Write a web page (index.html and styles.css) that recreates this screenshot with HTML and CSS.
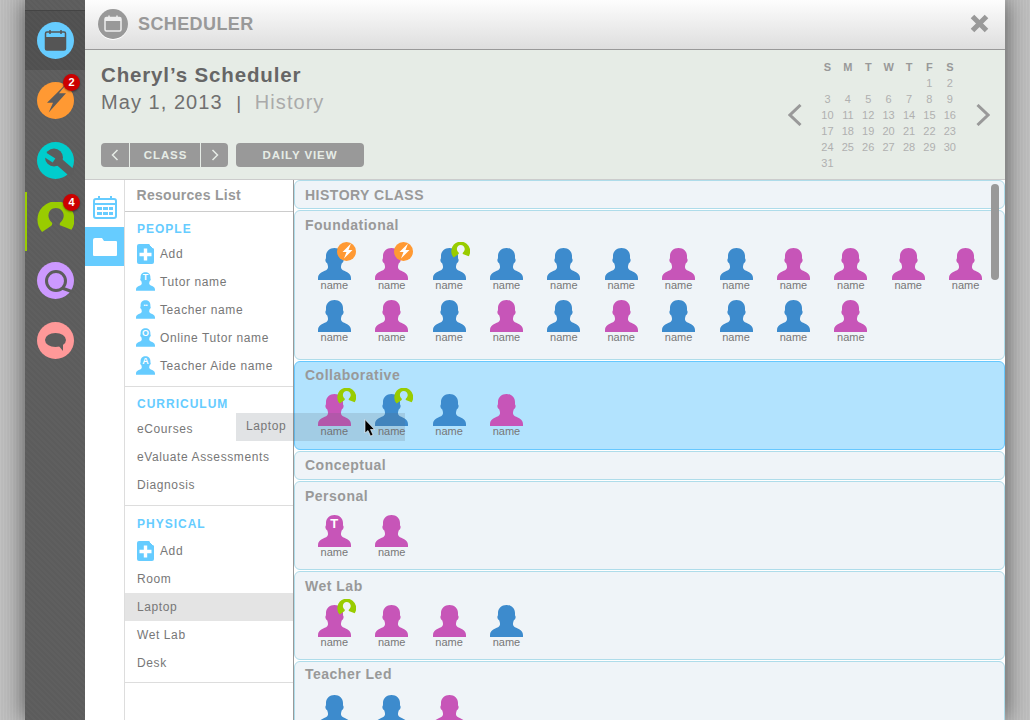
FILE: index.html
```html
<!DOCTYPE html>
<html lang="en">
<head>
    <meta charset="UTF-8">
    <title>Scheduler</title>
    <link rel="stylesheet" href="styles.css">
</head>
<body>
    <svg class="sprites" width="0" height="0">
        <symbol id="person" viewBox="0 0 33 32">
            <path d="M16.5 0C21.5 0 25 3.5 25 8C25 10 25 11 25.6 11.5C25.8 13 25 14.5 23.7 15.5C22.8 18.5 22.5 20 24 21.5C26 23.5 33 24 33 30L33 32L0 32L0 30C0 24 7 23.5 9 21.5C10.5 20 10.2 18.5 9.3 15.5C8 14.5 7.2 13 7.4 11.5C8 11 8 10 8 8C8 3.5 11.5 0 16.5 0Z"/>
        </symbol>
        <symbol id="ring" viewBox="0 0 19 19">
            <path d="M2.6 15.4A9.5 9.5 0 1 1 17.7 14.3L11.8 12C11.6 11.5 11.6 11 12 10.5C13.2 9.5 13.8 8.2 13.7 6.8C13.5 4.5 11.8 3.1 9.7 3.1C7.6 3.1 6 4.5 5.9 6.8C5.8 8.2 6.4 9.5 7.6 10.5C8 11 7.9 11.8 7 12.4Z"/>
        </symbol>
        <symbol id="bolt" viewBox="0 0 19 19">
            <circle cx="9.5" cy="9.5" r="9.5" fill="#ff9933"/>
            <path d="M14 1.5L5.5 10L9.5 10L7 16.5L15.5 8L11.5 8Z" fill="#fff"/>
        </symbol>
        <symbol id="add" viewBox="0 0 17 20">
            <path d="M2 0L12 0L17 5L17 18Q17 20 15 20L2 20Q0 20 0 18L0 2Q0 0 2 0Z" fill="#66ccff"/>
            <path d="M13 1L16 4" stroke="#fff"/>
            <path d="M6.8 4.5H10.2V8.8H14.5V12.2H10.2V16.5H6.8V12.2H2.5V8.8H6.8Z" fill="#fff"/>
        </symbol>
    </svg>

    <div class="app">
        <nav class="rail">
            <div class="rail-item active">
                <svg class="rail-icon" viewBox="0 0 37 37">
                    <circle cx="18.5" cy="18.5" r="18.5" fill="#66ccff"/>
                    <rect x="8.5" y="10" width="20" height="18" rx="1.5" fill="none" stroke="#555" stroke-width="1.5"/>
                    <rect x="8.5" y="15" width="20" height="13" fill="#555"/>
                    <path d="M13 8V12M24 8V12" stroke="#555" stroke-width="1.5"/>
                </svg>
            </div>
            <div class="rail-item">
                <svg class="rail-icon" viewBox="0 0 37 37">
                    <circle cx="18.5" cy="18.5" r="18.5" fill="#ff9933"/>
                    <path d="M31 0L10 20.7L16 20.7L11.7 30.5L29 11.3L22 11.3Z" fill="#5c5c5c"/>
                </svg>
                <span class="rail-badge">2</span>
            </div>
            <div class="rail-item">
                <svg class="rail-icon" viewBox="0 0 37 37">
                    <circle cx="18.5" cy="18.5" r="18.5" fill="#00cccc"/>
                    <circle cx="17" cy="15.5" r="9" fill="#5c5c5c"/>
                    <path d="M20 18L36 32" stroke="#5c5c5c" stroke-width="8"/>
                    <path d="M6 11.5L17 18.5" stroke="#00cccc" stroke-width="5"/>
                </svg>
            </div>
            <div class="rail-item user">
                <svg class="rail-icon ring-green" viewBox="0 0 19 19"><use href="#ring"/></svg>
                <span class="rail-badge">4</span>
            </div>
            <div class="rail-item">
                <svg class="rail-icon" viewBox="0 0 37 37">
                    <circle cx="18.5" cy="18.5" r="18.5" fill="#cc99ff"/>
                    <circle cx="19" cy="19" r="9.5" fill="none" stroke="#5c5c5c" stroke-width="3"/>
                    <path d="M25 26L36 30" stroke="#5c5c5c" stroke-width="3"/>
                </svg>
            </div>
            <div class="rail-item">
                <svg class="rail-icon" viewBox="0 0 37 37">
                    <circle cx="18.5" cy="18.5" r="18.5" fill="#ff9999"/>
                    <ellipse cx="18.5" cy="18" rx="10.5" ry="7" fill="#5c5c5c"/>
                    <path d="M21 23L26 29L26 22Z" fill="#5c5c5c"/>
                </svg>
            </div>
        </nav>

        <main class="window">
            <header class="titlebar">
                <span class="title-icon">
                    <svg viewBox="0 0 30 30" width="30" height="30">
                        <rect x="7" y="8.5" width="16" height="13.5" rx="1.5" fill="none" stroke="#eee" stroke-width="1.5"/>
                        <rect x="7" y="9" width="16" height="3" fill="#eee"/>
                        <path d="M11 6.5V9.5M19 6.5V9.5" stroke="#eee" stroke-width="1.5"/>
                    </svg>
                </span>
                <h1>SCHEDULER</h1>
                <svg class="close" viewBox="0 0 19 19"><path d="M2.5 2.5L16.5 16.5M16.5 2.5L2.5 16.5" stroke="#999" stroke-width="5"/></svg>
            </header>

            <section class="subheader">
                <div class="sub-left">
                    <h2>Cheryl’s Scheduler</h2>
                    <div class="sub-date">May 1, 2013 <span class="sep">|</span> <span class="sub-class">History</span></div>
                    <div class="toolbar">
                        <div class="segmented">
                            <button class="btn btn-arrow"><svg viewBox="0 0 8 12" width="8" height="12"><path d="M6.5 1L1.5 6L6.5 11" fill="none" stroke="#e6ece6" stroke-width="1.5"/></svg></button>
                            <button class="btn btn-class">CLASS</button>
                            <button class="btn btn-arrow"><svg viewBox="0 0 8 12" width="8" height="12"><path d="M1.5 1L6.5 6L1.5 11" fill="none" stroke="#e6ece6" stroke-width="1.5"/></svg></button>
                        </div>
                        <button class="btn btn-view">DAILY VIEW</button>
                    </div>
                </div>
                <div class="calendar">
                    <svg class="cal-arrow" viewBox="0 0 14 22" width="14" height="22"><path d="M12.5 1L2 11L12.5 21" fill="none" stroke="#999" stroke-width="3"/></svg>
                    <div class="cal-grid">
                        <b>S</b><b>M</b><b>T</b><b>W</b><b>T</b><b>F</b><b>S</b>
                        <span></span><span></span><span></span><span></span><span></span><span>1</span><span>2</span>
                        <span>3</span><span>4</span><span>5</span><span>6</span><span>7</span><span>8</span><span>9</span>
                        <span>10</span><span>11</span><span>12</span><span>13</span><span>14</span><span>15</span><span>16</span>
                        <span>17</span><span>18</span><span>19</span><span>20</span><span>21</span><span>22</span><span>23</span>
                        <span>24</span><span>25</span><span>26</span><span>27</span><span>28</span><span>29</span><span>30</span>
                        <span>31</span>
                    </div>
                    <svg class="cal-arrow" viewBox="0 0 14 22" width="14" height="22"><path d="M1.5 1L12 11L1.5 21" fill="none" stroke="#999" stroke-width="3"/></svg>
                </div>
            </section>

            <section class="body-row">
                <div class="tabs">
                    <div class="tab">
                        <svg viewBox="0 0 24 23" width="24" height="23">
                            <rect x="1" y="3" width="22" height="19" rx="2" fill="none" stroke="#66ccff" stroke-width="2"/>
                            <path d="M1 8H23" stroke="#66ccff" stroke-width="2"/>
                            <path d="M4 11H9V14H4ZM10 11H15V14H10ZM16 11H20V14H16ZM4 16H9V19H4ZM10 16H15V19H10ZM16 16H20V19H16Z" fill="#66ccff"/>
                            <path d="M6 0V4M18 0V4" stroke="#66ccff" stroke-width="2"/>
                        </svg>
                    </div>
                    <div class="tab selected">
                        <svg viewBox="0 0 24 18" width="24" height="18"><path d="M0 2Q0 0 2 0H9L11 3H23Q24 3 24 4V17Q24 18 23 18H1Q0 18 0 17Z" fill="#fff"/></svg>
                    </div>
                </div>

                <aside class="resources">
                    <h3 class="resources-head">Resources List</h3>
                    <div class="res-section">
                        <h4>PEOPLE</h4>
                        <div class="res-row"><svg class="add-icon"><use href="#add"/></svg>Add</div>
                        <div class="res-row"><span class="mini"><svg><use href="#person"/></svg><i>T</i></span>Tutor name</div>
                        <div class="res-row"><span class="mini"><svg><use href="#person"/></svg><i class="eyes">••</i></span>Teacher name</div>
                        <div class="res-row"><span class="mini"><svg><use href="#person"/></svg><i>O</i></span>Online Tutor name</div>
                        <div class="res-row"><span class="mini"><svg><use href="#person"/></svg><i>A</i></span>Teacher Aide name</div>
                    </div>
                    <div class="res-section">
                        <h4>CURRICULUM</h4>
                        <div class="res-row">eCourses</div>
                        <div class="res-row">eValuate Assessments</div>
                        <div class="res-row">Diagnosis</div>
                    </div>
                    <div class="res-section physical">
                        <h4>PHYSICAL</h4>
                        <div class="res-row"><svg class="add-icon"><use href="#add"/></svg>Add</div>
                        <div class="res-row">Room</div>
                        <div class="res-row current">Laptop</div>
                        <div class="res-row">Wet Lab</div>
                        <div class="res-row">Desk</div>
                    </div>
                </aside>

                <div class="groups">
                    <div class="group slim"><h3>HISTORY CLASS</h3></div>

                    <div class="group foundational">
                        <h3>Foundational</h3>
                        <div class="people">
                            <div class="person blue"><svg><use href="#person"/></svg><svg class="badge"><use href="#bolt"/></svg><span>name</span></div>
                            <div class="person pink"><svg><use href="#person"/></svg><svg class="badge"><use href="#bolt"/></svg><span>name</span></div>
                            <div class="person blue"><svg><use href="#person"/></svg><svg class="badge ring-green"><use href="#ring"/></svg><span>name</span></div>
                            <div class="person blue"><svg><use href="#person"/></svg><span>name</span></div>
                            <div class="person blue"><svg><use href="#person"/></svg><span>name</span></div>
                            <div class="person blue"><svg><use href="#person"/></svg><span>name</span></div>
                            <div class="person pink"><svg><use href="#person"/></svg><span>name</span></div>
                            <div class="person blue"><svg><use href="#person"/></svg><span>name</span></div>
                            <div class="person pink"><svg><use href="#person"/></svg><span>name</span></div>
                            <div class="person pink"><svg><use href="#person"/></svg><span>name</span></div>
                            <div class="person pink"><svg><use href="#person"/></svg><span>name</span></div>
                            <div class="person pink"><svg><use href="#person"/></svg><span>name</span></div>
                            <div class="person blue"><svg><use href="#person"/></svg><span>name</span></div>
                            <div class="person pink"><svg><use href="#person"/></svg><span>name</span></div>
                            <div class="person blue"><svg><use href="#person"/></svg><span>name</span></div>
                            <div class="person pink"><svg><use href="#person"/></svg><span>name</span></div>
                            <div class="person blue"><svg><use href="#person"/></svg><span>name</span></div>
                            <div class="person pink"><svg><use href="#person"/></svg><span>name</span></div>
                            <div class="person blue"><svg><use href="#person"/></svg><span>name</span></div>
                            <div class="person blue"><svg><use href="#person"/></svg><span>name</span></div>
                            <div class="person blue"><svg><use href="#person"/></svg><span>name</span></div>
                            <div class="person pink"><svg><use href="#person"/></svg><span>name</span></div>
                        </div>
                    </div>

                    <div class="group hover">
                        <h3>Collaborative</h3>
                        <div class="people">
                            <div class="person pink"><svg><use href="#person"/></svg><svg class="badge ring-green"><use href="#ring"/></svg><span>name</span></div>
                            <div class="person blue"><svg><use href="#person"/></svg><svg class="badge ring-green"><use href="#ring"/></svg><span>name</span></div>
                            <div class="person blue"><svg><use href="#person"/></svg><span>name</span></div>
                            <div class="person pink"><svg><use href="#person"/></svg><span>name</span></div>
                        </div>
                    </div>

                    <div class="group slim conceptual"><h3>Conceptual</h3></div>

                    <div class="group">
                        <h3>Personal</h3>
                        <div class="people">
                            <div class="person pink"><svg><use href="#person"/></svg><i class="letter">T</i><span>name</span></div>
                            <div class="person pink"><svg><use href="#person"/></svg><span>name</span></div>
                        </div>
                    </div>

                    <div class="group">
                        <h3>Wet Lab</h3>
                        <div class="people">
                            <div class="person pink"><svg><use href="#person"/></svg><svg class="badge ring-green"><use href="#ring"/></svg><span>name</span></div>
                            <div class="person pink"><svg><use href="#person"/></svg><span>name</span></div>
                            <div class="person pink"><svg><use href="#person"/></svg><span>name</span></div>
                            <div class="person blue"><svg><use href="#person"/></svg><span>name</span></div>
                        </div>
                    </div>

                    <div class="group teacher">
                        <h3>Teacher Led</h3>
                        <div class="people">
                            <div class="person blue"><svg><use href="#person"/></svg></div>
                            <div class="person blue"><svg><use href="#person"/></svg></div>
                            <div class="person pink"><svg><use href="#person"/></svg></div>
                        </div>
                    </div>

                    <div class="scrollbar"></div>
                </div>
            </section>

            <div class="drag-ghost">Laptop</div>
            <svg class="cursor" viewBox="0 0 12 18" width="12" height="18"><path d="M1 0.5L1 14L4 11.5L6.5 17L9 16L6.5 10.5L10.5 10.5Z" fill="#000" stroke="#fff" stroke-width="0.6"/></svg>
        </main>
    </div>
</body>
</html>
```

FILE: styles.css
```css
* {
    box-sizing: border-box;
}
html, body {
    margin: 0;
    height: 720px;
    overflow: hidden;
}
body {
    font-family: "Liberation Sans", Arial, sans-serif;
    background: repeating-linear-gradient(90deg, #c2c2c2 0 1px, #bdbdbd 1px 3px);
}
h1, h2, h3, h4 {
    margin: 0;
}
.sprites {
    position: absolute;
}
.app {
    display: flex;
    width: 980px;
    height: 720px;
    margin-left: 25px;
    box-shadow: 0 0 22px rgba(0, 0, 0, 0.6);
}

/* left rail */
.rail {
    width: 60px;
    padding-top: 10px;
    flex-shrink: 0;
    background: repeating-linear-gradient(45deg, #5c5c5c 0 2px, #5f5f5f 2px 4px);
}
.rail-item {
    position: relative;
    display: flex;
    align-items: center;
    justify-content: center;
    height: 60px;
}
.rail-item.active {
    background: repeating-linear-gradient(45deg, #505050 0 2px, #535353 2px 4px);
    border-top: 1px solid #444;
}
.rail-item.user::before {
    content: "";
    position: absolute;
    left: 0;
    top: 2px;
    width: 2px;
    height: 59px;
    background: #99cc00;
}
.rail-icon {
    width: 37px;
    height: 37px;
    display: block;
}
.ring-green {
    fill: #99cc00;
}
.rail-badge {
    position: absolute;
    left: 38px;
    top: 4px;
    width: 17px;
    height: 17px;
    border-radius: 50%;
    background: #cc0000;
    color: #fff;
    font-size: 11px;
    font-weight: bold;
    line-height: 17px;
    text-align: center;
    box-shadow: 0 1px 2px rgba(0, 0, 0, 0.4);
}

/* window */
.window {
    position: relative;
    flex: 1;
    display: flex;
    flex-direction: column;
    min-width: 0;
    background: #fff;
}
.titlebar {
    display: flex;
    align-items: center;
    height: 50px;
    flex-shrink: 0;
    padding: 0 16px 1px 13px;
    background: linear-gradient(#fdfdfd, #dedede);
    border-bottom: 1px solid #999;
}
.title-icon {
    width: 30px;
    height: 30px;
    border-radius: 50%;
    background: #999;
    box-shadow: 0 1px 0 #fff;
}
.titlebar h1 {
    margin-left: 10px;
    font-size: 18px;
    letter-spacing: 0.4px;
    color: #999;
}
.close {
    width: 19px;
    height: 19px;
    margin: 0 0 1px auto;
}

.subheader {
    display: flex;
    justify-content: space-between;
    height: 130px;
    flex-shrink: 0;
    background: #e6ece6;
    border-bottom: 1px solid #ccc;
}
.sub-left {
    display: flex;
    flex-direction: column;
    padding: 13px 0 12px 16px;
}
.sub-left h2 {
    font-size: 20.5px;
    line-height: 24px;
    letter-spacing: 0.85px;
    color: #666;
}
.sub-date {
    margin-top: 3px;
    font-size: 20px;
    line-height: 24px;
    letter-spacing: 1.05px;
    color: #707070;
}
.sep {
    margin: 0 6px 0 7px;
    font-size: 19px;
}
.sub-class {
    color: #aaa;
}
.toolbar {
    display: flex;
    gap: 8px;
    margin-top: auto;
}
.segmented {
    display: flex;
    gap: 1px;
}
.btn {
    display: flex;
    align-items: center;
    justify-content: center;
    height: 24px;
    padding: 0;
    border: none;
    background: #999;
    color: #e6ece6;
    font-family: inherit;
    font-size: 11.5px;
    font-weight: bold;
    letter-spacing: 0.9px;
}
.btn-arrow {
    width: 28px;
}
.btn-arrow:first-child {
    border-radius: 4px 0 0 4px;
}
.btn-arrow:last-child {
    width: 27px;
    border-radius: 0 4px 4px 0;
}
.btn-class {
    width: 70px;
    padding-left: 1px;
}
.btn-view {
    width: 128px;
    border-radius: 4px;
}
.calendar {
    display: flex;
    align-items: center;
    padding: 9px 15px 0 0;
}
.cal-arrow {
    margin-top: -9px;
}
.cal-grid {
    display: grid;
    grid-template-columns: repeat(7, 20.4px);
    grid-auto-rows: 16px;
    margin: 0 16px 0 15px;
    align-self: flex-start;
    font-size: 11px;
    line-height: 16px;
    text-align: center;
    color: #b0b0b0;
}
.cal-grid b {
    color: #999;
}

/* lower part */
.body-row {
    display: flex;
    flex: 1;
    min-height: 0;
}
.tabs {
    width: 40px;
    flex-shrink: 0;
    border-right: 1px solid #ddd;
}
.tab {
    display: flex;
    align-items: center;
    justify-content: center;
    height: 47px;
    padding-top: 8px;
}
.tab.selected {
    height: 39px;
    padding-top: 0;
    background: #66ccff;
}
.resources {
    width: 169px;
    flex-shrink: 0;
    border-right: 1px solid #999;
}
.resources-head {
    height: 32px;
    padding: 7px 0 0 11.5px;
    font-size: 14px;
    line-height: 16px;
    letter-spacing: 0.3px;
    color: #999;
    border-bottom: 1px solid #ccc;
}
.res-section {
    padding: 10px 0 6px;
    border-bottom: 1px solid #ddd;
}
.res-section h4 {
    margin-bottom: 4px;
    padding-left: 12px;
    font-size: 12px;
    line-height: 14px;
    letter-spacing: 1px;
    color: #66ccff;
}
.res-section.physical {
    padding: 11px 0 5px;
}
.res-section.physical h4 {
    margin-bottom: 6px;
}
.res-row {
    display: flex;
    align-items: center;
    height: 28px;
    padding-left: 12px;
    font-size: 12px;
    letter-spacing: 0.6px;
    color: #777;
}
.res-row.current {
    background: #e4e4e4;
}
.add-icon {
    width: 17px;
    height: 20px;
    margin-right: 6px;
}
.mini {
    position: relative;
    width: 19px;
    height: 19px;
    margin: -2px 5px 0 -1px;
    fill: #66ccff;
}
.mini svg {
    width: 19px;
    height: 19px;
    display: block;
}
.mini i {
    position: absolute;
    left: 0;
    top: 1px;
    width: 19px;
    font-size: 9px;
    font-style: normal;
    font-weight: bold;
    line-height: 9px;
    letter-spacing: 0;
    text-align: center;
    color: #fff;
}
.mini i.eyes {
    font-size: 6px;
}

.groups {
    position: relative;
    flex: 1;
    display: flex;
    flex-direction: column;
    gap: 1px;
    min-width: 0;
    overflow: hidden;
    background: #fff;
}
.group {
    height: 89px;
    flex-shrink: 0;
    padding: 6px 0 0 10px;
    background: #eff4f8;
    border: 1px solid #aedcea;
    border-radius: 6px;
}
.group h3 {
    font-size: 14px;
    line-height: 16px;
    letter-spacing: 0.5px;
    color: #999;
}
.group.slim {
    height: 29px;
}
.group.conceptual {
    padding-top: 5px;
}
.group.foundational {
    height: 150px;
}
.group.foundational .people {
    margin-top: 15px;
}
.group.hover {
    padding-top: 5px;
    background: #b2e3fe;
    border-color: #66c8ff;
}
.group.teacher {
    padding-top: 4px;
}
.group.teacher .people {
    margin-top: 13px;
}
.people {
    display: flex;
    flex-wrap: wrap;
    margin: 11px 0 0 0.6px;
}
.person {
    position: relative;
    width: 57.4px;
    height: 52px;
    text-align: center;
}
.person svg {
    display: block;
    width: 33px;
    height: 32px;
    margin: 0 auto;
}
.person span {
    display: block;
    margin-top: -1px;
    font-size: 11px;
    line-height: 12px;
    color: #777;
}
.person.blue {
    fill: #3d8bcd;
}
.person.pink {
    fill: #c755b8;
}
.person .badge {
    position: absolute;
    left: 31px;
    top: -6px;
    width: 19px;
    height: 19px;
}
.person .ring-green {
    fill: #99cc00;
}
.letter {
    position: absolute;
    left: 0;
    top: 1px;
    width: 100%;
    font-size: 13px;
    font-style: normal;
    font-weight: bold;
    line-height: 16px;
    color: #fff;
}
.scrollbar {
    position: absolute;
    right: 6px;
    top: 4px;
    width: 8px;
    height: 96px;
    border-radius: 4px;
    background: #999;
}

/* dragged resource */
.drag-ghost {
    position: absolute;
    left: 151px;
    top: 413px;
    width: 169px;
    height: 28px;
    padding-left: 10px;
    background: rgba(90, 100, 110, 0.18);
    font-size: 12px;
    line-height: 26px;
    letter-spacing: 0.6px;
    color: #777;
}
.cursor {
    position: absolute;
    left: 279px;
    top: 419px;
}
```
